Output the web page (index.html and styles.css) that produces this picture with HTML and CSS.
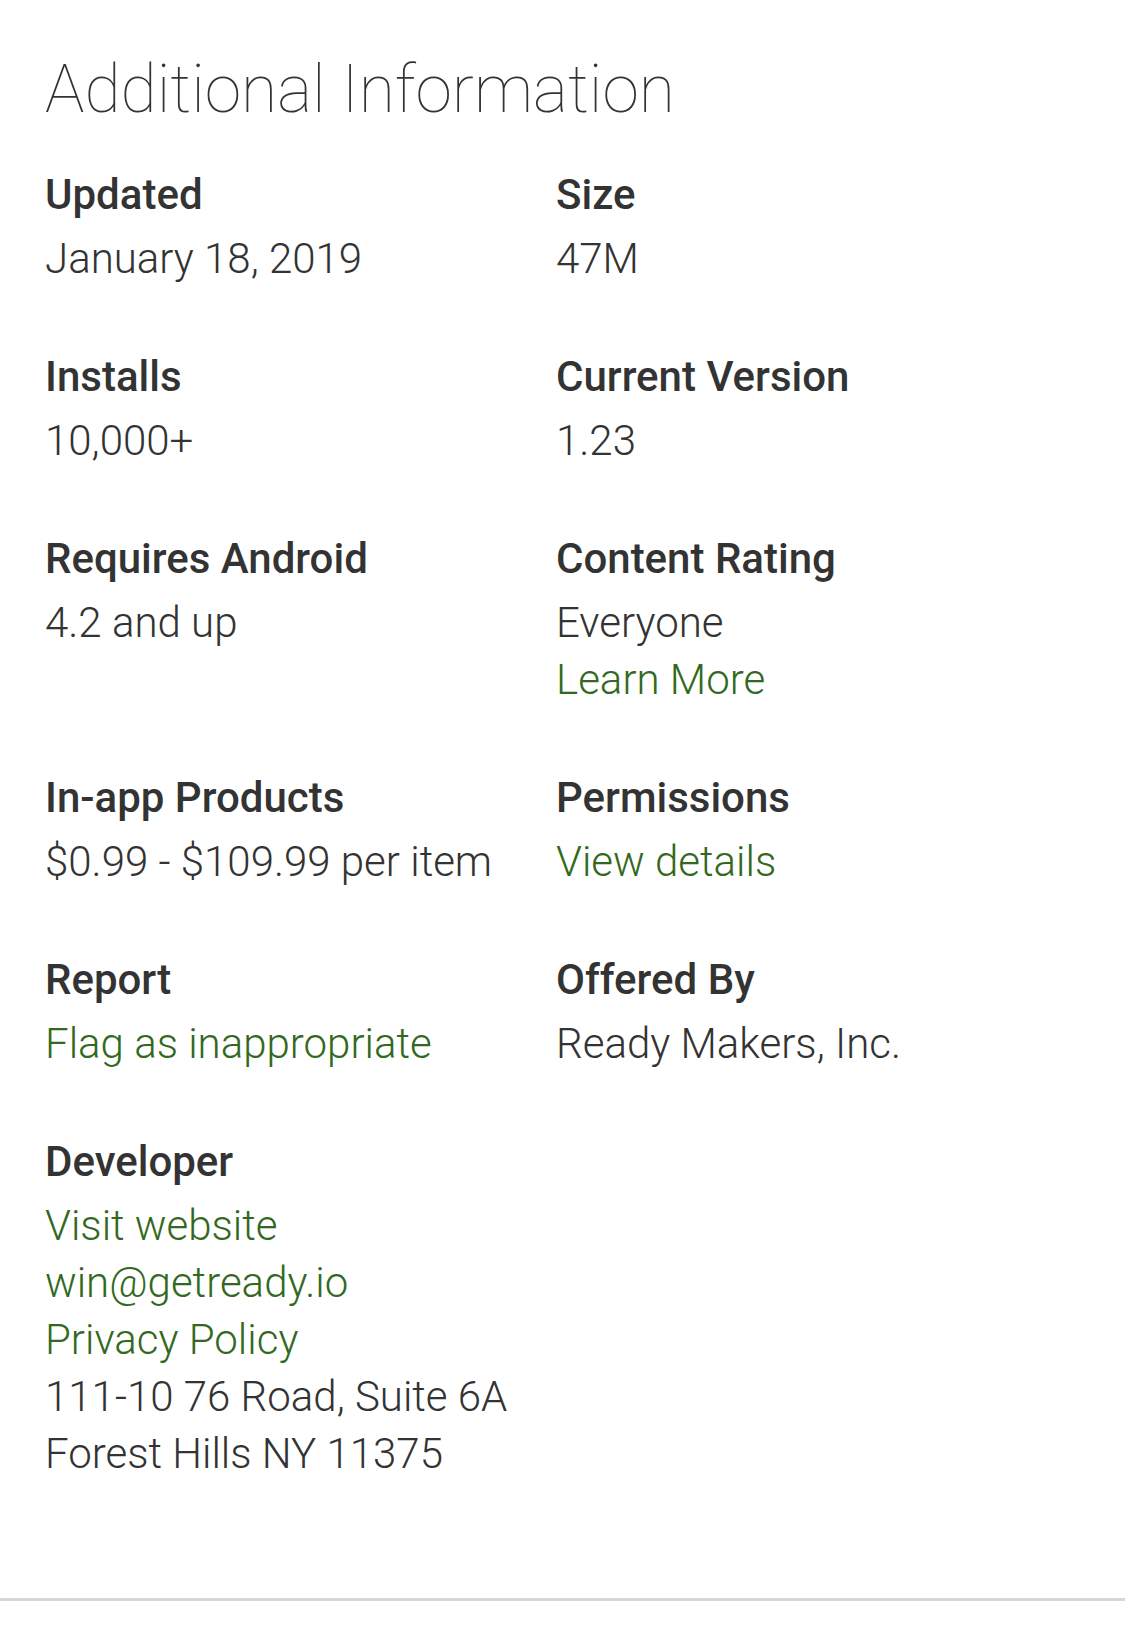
FILE: index.html
```html
<!DOCTYPE html>
<html lang="en">
<head>
  <meta charset="UTF-8">
  <title>Additional Information</title>
  <link rel="stylesheet" href="styles.css">
</head>
<body>
  <div class="info-section">
    <h1 class="info-title">Additional Information</h1>

    <div class="info-grid">
      <div class="info-item">
        <div class="info-label">Updated</div>
        <div class="info-value">January 18, 2019</div>
      </div>
      <div class="info-item">
        <div class="info-label">Size</div>
        <div class="info-value">47M</div>
      </div>

      <div class="info-item">
        <div class="info-label">Installs</div>
        <div class="info-value">10,000+</div>
      </div>
      <div class="info-item">
        <div class="info-label">Current Version</div>
        <div class="info-value">1.23</div>
      </div>

      <div class="info-item">
        <div class="info-label">Requires Android</div>
        <div class="info-value">4.2 and up</div>
      </div>
      <div class="info-item">
        <div class="info-label">Content Rating</div>
        <div class="info-value">Everyone</div>
        <a class="info-value info-link" href="#">Learn More</a>
      </div>

      <div class="info-item">
        <div class="info-label">In-app Products</div>
        <div class="info-value">$0.99 - $109.99 per item</div>
      </div>
      <div class="info-item">
        <div class="info-label">Permissions</div>
        <a class="info-value info-link" href="#">View details</a>
      </div>

      <div class="info-item">
        <div class="info-label">Report</div>
        <a class="info-value info-link" href="#">Flag as inappropriate</a>
      </div>
      <div class="info-item">
        <div class="info-label">Offered By</div>
        <div class="info-value">Ready Makers, Inc.</div>
      </div>

      <div class="info-item">
        <div class="info-label">Developer</div>
        <a class="info-value info-link" href="#">Visit website</a>
        <a class="info-value info-link" href="#">win@getready.io</a>
        <a class="info-value info-link" href="#">Privacy Policy</a>
        <div class="info-value">111-10 76 Road, Suite 6A</div>
        <div class="info-value">Forest Hills NY 11375</div>
      </div>
    </div>
  </div>
  <div class="info-divider"></div>
</body>
</html>
```

FILE: styles.css
```css
body {
  margin: 0;
  background: #fff;
  font-family: Roboto, "Liberation Sans", sans-serif;
  color: #333;
}

.info-section {
  padding: 57px 0 0 45px;
}

.info-title {
  margin: 0 0 43px;
  font-size: 66px;
  line-height: 66px;
  font-weight: 100;
  color: #333;
}

.info-grid {
  display: grid;
  grid-template-columns: 511px 1fr;
  row-gap: 61px;
}

.info-item {
  display: flex;
  flex-direction: column;
  align-items: flex-start;
}

.info-label {
  font-size: 42px;
  line-height: 57px;
  font-weight: 500;
  margin-bottom: 7px;
}

.info-value {
  font-size: 42px;
  line-height: 57px;
  font-weight: 300;
  color: #333;
}

.info-link {
  color: #33691e;
  text-decoration: none;
}

.info-divider {
  height: 3px;
  background: #d6d6d6;
  margin-top: 116px;
}
```
